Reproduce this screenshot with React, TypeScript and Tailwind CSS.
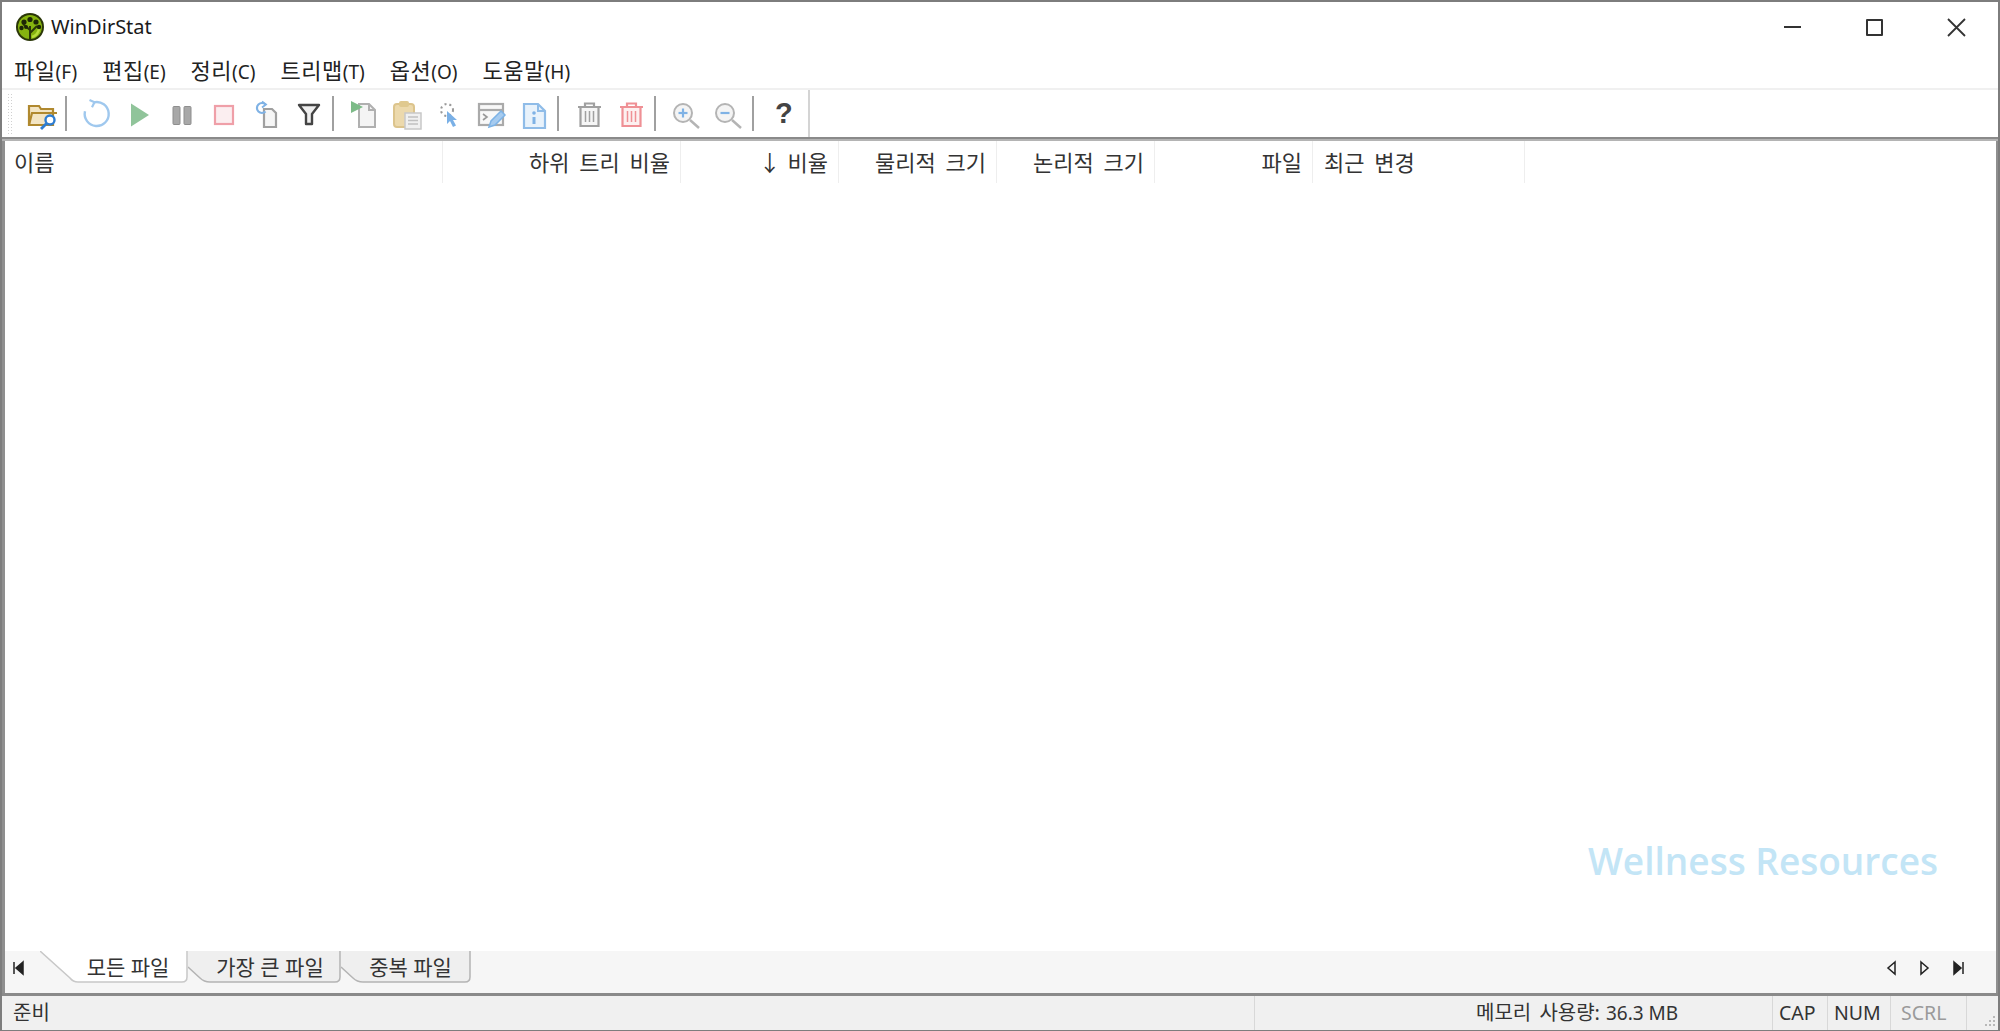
const KR = { fontFamily: '"Noto Sans", "Noto Sans CJK KR", sans-serif' };

const menus = [
  ['파일', '(F)'],
  ['편집', '(E)'],
  ['정리', '(C)'],
  ['트리맵', '(T)'],
  ['옵션', '(O)'],
  ['도움말', '(H)'],
];

const columns = [
  { label: '이름', w: 'w-[438px]', cls: 'pl-[9px] pr-[10px]' },
  { label: '하위 트리 비율', w: 'w-[238px]', cls: 'pl-[11px] pr-[10px] justify-end [word-spacing:4px]' },
  { label: '↓ 비율', w: 'w-[158px]', cls: 'pl-[11px] pr-[10px] justify-end [word-spacing:1px]' },
  { label: '물리적 크기', w: 'w-[158px]', cls: 'pl-[11px] pr-[10px] justify-end [word-spacing:4px]' },
  { label: '논리적 크기', w: 'w-[158px]', cls: 'pl-[11px] pr-[10px] justify-end [word-spacing:4px]' },
  { label: '파일', w: 'w-[158px]', cls: 'pl-[11px] pr-[10px] justify-end' },
  { label: '최근 변경', w: 'w-[212px]', cls: 'pl-[11px] pr-[10px] [word-spacing:4px]' },
];

function Icon({ children }: { children: React.ReactNode }) {
  return (
    <div className="w-[42.4px] h-full flex items-center justify-center shrink-0">
      <svg width="32" height="32" viewBox="0 0 32 32" fill="none">{children}</svg>
    </div>
  );
}

function Sep() {
  return (
    <div className="w-[12.6px] h-full shrink-0 flex items-center pl-[2px]">
      <div className="w-[2px] h-[35px] bg-[#a0a0a0]" />
    </div>
  );
}

function Trash({ c, fill }: { c: string; fill: string }) {
  return (
    <>
      <path d="M5 9h23M12 9V5.5h9V9" stroke={c} strokeWidth="2.2" />
      <path d="M7.500 9v19h18V9z" fill={fill} stroke={c} strokeWidth="2.2" />
      <path d="M12.500 13v11M16.500 13v11M20.500 13v11" stroke={c} strokeWidth="1.5" />
    </>
  );
}

function Lens({ minus }: { minus?: boolean }) {
  return (
    <>
      <circle cx="13" cy="15" r="9" fill="#f4f4f4" stroke="#b4b4b4" strokeWidth="2" />
      <path d="M20 22l9 8" stroke="#b4b4b4" strokeWidth="2.500" />
      <path d="M8.500 15h9" stroke="#7fb2e5" strokeWidth="2.200" />
      {!minus && <path d="M13 10.500v9" stroke="#7fb2e5" strokeWidth="2.200" />}
    </>
  );
}

function Toolbar() {
  return (
    <div className="h-[47px] flex items-center bg-white shrink-0">
      <div className="w-[808px] h-full flex items-center border-r-2 border-[#d4d4d4]">
        <div className="ml-[5px] mr-[8px] w-[6px] h-[42px] shrink-0 bg-[radial-gradient(#d0d0d0_1px,transparent_1px)] bg-[length:3px_3px]" />
        <Icon>
          <path d="M3 27V8h10l2 3h12v16z" fill="#f3e5c4" stroke="#b0892f" strokeWidth="2.200" />
          <path d="M3 27l3-12h25" stroke="#b0892f" strokeWidth="2.200" />
          <circle cx="24" cy="22" r="4.500" fill="#fff" stroke="#2d7dd2" strokeWidth="2.400" />
          <path d="M20.500 25.500L15 31" stroke="#2d7dd2" strokeWidth="2.800" />
        </Icon>
        <Sep />
        <Icon>
          <path d="M13 4.300a12 12 0 1 1-9 9" stroke="#9fc8ee" strokeWidth="2.400" />
          <path d="M8.500 2l5 2.300-2.500 5" stroke="#9fc8ee" strokeWidth="2.200" />
        </Icon>
        <Icon><path d="M7 5.500l18 11.500-18 11.500z" fill="#90c49a" /></Icon>
        <Icon>
          <rect x="7" y="8.500" width="7" height="18" rx="1" fill="#a8a8a8" stroke="#8e8e8e" />
          <rect x="18" y="8.500" width="7" height="18" rx="1" fill="#a8a8a8" stroke="#8e8e8e" />
        </Icon>
        <Icon><rect x="7" y="8" width="18" height="18" fill="#fbeef0" stroke="#ef9fa8" strokeWidth="2.200" /></Icon>
        <Icon>
          <path d="M13 11h8l4 4v14H13z" fill="#f6f6f6" stroke="#a0a0a0" strokeWidth="2.200" />
          <path d="M14.500 13.500a5 5 0 1 1 0-7" stroke="#7fb2e5" strokeWidth="2.200" />
          <path d="M11 3.500l4 3-4 3" stroke="#7fb2e5" strokeWidth="1.800" />
        </Icon>
        <Icon>
          <path d="M6 7h20l-7 9v10h-6V16z" fill="#efefef" stroke="#444" strokeWidth="2.400" strokeLinejoin="round" />
        </Icon>
        <Sep />
        <Icon>
          <path d="M11 6h10l6 6v17H11z" fill="#f4f4f4" stroke="#b0b0b0" strokeWidth="2" />
          <path d="M21 6v6h6" stroke="#b0b0b0" strokeWidth="2" />
          <path d="M3 3l12 6-12 6z" fill="#7dbb88" />
        </Icon>
        <Icon>
          <rect x="3" y="6" width="20" height="23" rx="3" fill="#ecd9ac" stroke="#dcc48c" strokeWidth="2" />
          <rect x="8" y="3" width="10" height="6" rx="2" fill="#e0c98f" />
          <rect x="14" y="15" width="16" height="16" fill="#f0f0f0" stroke="#c8c8c8" strokeWidth="1.500" />
          <path d="M17 19h10M17 22.500h10M17 26h10" stroke="#c0c0c0" strokeWidth="1.400" />
        </Icon>
        <Icon>
          <circle cx="14" cy="12" r="6" stroke="#999" strokeWidth="2" strokeDasharray="2 3" />
          <path d="M14 13v13l3-3 3 6 3-1.500-3-5.500h4z" fill="#7ab0e6" />
        </Icon>
        <Icon>
          <rect x="4" y="6" width="24" height="21" fill="#f8f8f8" stroke="#aaa" strokeWidth="2.200" />
          <path d="M4 12h24" stroke="#aaa" strokeWidth="2.200" />
          <path d="M8 16l4 3-4 3" stroke="#999" strokeWidth="1.600" />
          <path d="M14 29l2-6 10-10 4 4-10 10z" fill="#a6cbef" stroke="#7db3e6" strokeWidth="1.500" />
        </Icon>
        <Icon>
          <path d="M6 6h14l7 7v17H6z" fill="#e8f2fb" stroke="#8fbce8" strokeWidth="2.200" />
          <path d="M20 6v7h7" stroke="#8fbce8" strokeWidth="2" />
          <circle cx="16" cy="15" r="1.800" fill="#7fb2e5" />
          <path d="M16 19v7" stroke="#7fb2e5" strokeWidth="3" />
        </Icon>
        <Sep />
        <Icon><Trash c="#a0a0a0" fill="#f6f6f6" /></Icon>
        <Icon><Trash c="#ef9095" fill="#fdf0f0" /></Icon>
        <Sep />
        <Icon><Lens /></Icon>
        <Icon><Lens minus /></Icon>
        <Sep />
        <div className="w-[42.4px] pl-[1px] text-center text-[29px] font-bold text-[#444] shrink-0" style={{ fontFamily: '"Liberation Sans", sans-serif' }}>?</div>
      </div>
    </div>
  );
}

function Arrow({ d, fill }: { d: string; fill?: string }) {
  return (
    <svg width="12" height="16" viewBox="0 0 12 16" fill={fill ?? 'none'} className="shrink-0">
      <path d={d} stroke="#222" strokeWidth="1.500" />
    </svg>
  );
}

function Tab({ label, active, w, slant, pl }: { label: string; active?: boolean; w: number; slant: number; pl: string }) {
  // active tab slants from the top, the others only show a short curve at the bottom
  const edge = active
    ? `M0 0 L${slant} 27 Q${slant + 3} 31 ${slant + 8} 31`
    : `M0 16 L${slant - 4} 27 Q${slant} 31 ${slant + 6} 31`;
  const right = `H${w - 6} Q${w - 1} 31 ${w - 1} 26 V0`;
  return (
    <div className={`relative h-[33px] flex items-center justify-center shrink-0 text-[21px] text-[#333] ${pl}`} style={{ width: w }}>
      <svg width={w} height="33" className="absolute inset-0">
        <path d={`${edge} ${right} H0 Z`} fill={active ? '#ffffff' : '#efefef'} />
        <path d={`${edge} ${right}`} fill="none" stroke={active ? '#c8c8c8' : '#b4b4b4'} strokeWidth="1.500" />
      </svg>
      <span className="relative">{label}</span>
    </div>
  );
}

export default function App() {
  return (
    <div className="w-[2000px] h-[1031px] flex flex-col bg-white border-x-2 border-t-2 border-b border-[#7d7d7d] overflow-hidden text-[#222]" style={KR}>
      <div className="h-[50px] flex items-center shrink-0">
        <svg width="28" height="28" viewBox="0 0 28 28" className="ml-[14px] mr-[7px]">
          <circle cx="14" cy="14" r="14" fill="#2a3608" />
          <circle cx="14" cy="14" r="12" fill="#86b30f" />
          <path d="M14 26V13M14 20l7-7M14 17L7 11" stroke="#2a3608" strokeWidth="2" />
          <path d="M16 24q6-2 7-8" stroke="#b6dc3c" strokeWidth="2.500" fill="none" />
          <circle cx="8" cy="9" r="2.600" fill="#1d2606" />
          <circle cx="14" cy="6.500" r="2.600" fill="#1d2606" />
          <circle cx="20" cy="9" r="2.600" fill="#1d2606" />
          <circle cx="5.500" cy="15" r="2.200" fill="#1d2606" />
          <circle cx="23" cy="14" r="2.200" fill="#1d2606" />
          <circle cx="10" cy="14" r="2" fill="#1d2606" />
        </svg>
        <span className="text-[20px] text-[#1a1a1a]">WinDirStat</span>
        <div className="ml-auto flex items-center">
          <div className="w-[82px] flex justify-center">
            <div className="w-[17px] h-[2px] bg-[#333]" />
          </div>
          <div className="w-[82px] flex justify-center">
            <div className="w-[17px] h-[17px] border-2 border-[#333] rounded-[1px]" />
          </div>
          <div className="w-[82px] mr-[1px] flex justify-center">
            <svg width="19" height="19" viewBox="0 0 19 19"><path d="M1 1l17 17M18 1L1 18" stroke="#333" strokeWidth="1.800" /></svg>
          </div>
        </div>
      </div>

      <div className="h-[38px] flex items-center gap-[25px] pl-[12px] shrink-0 border-b-2 border-[#f0f0f0]">
        {menus.map(([k, m]) => (
          <div key={k} className="text-[22px] tracking-[0.5px] text-[#222] flex items-baseline">
            {k}<span className="text-[19px] tracking-normal">{m}</span>
          </div>
        ))}
      </div>

      <Toolbar />

      <div className="h-[4px] shrink-0 bg-[#8a8a8a] border-b-2 border-[#b4b4b4]" />

      <div className="flex-1 flex flex-col min-h-0 border-l-[3px] border-r-2 border-[#8f8f8f] relative">
        <div className="h-[42px] flex shrink-0">
          {columns.map((c) => (
            <div key={c.label} className={`${c.w} ${c.cls} h-full border-r border-[#eeeeee] flex items-center text-[22px] text-[#333]`}>
              {c.label}
            </div>
          ))}
        </div>
        <div className="flex-1" />
        <div className="absolute right-[58px] bottom-[105px] text-[37px] font-semibold text-[#c3e5f6]" style={{ fontFamily: '"Open Sans", sans-serif' }}>
          Wellness Resources
        </div>

        <div className="h-[33px] flex items-center bg-[#f6f6f6] shrink-0">
          <div className="w-[35px] pl-[7px]"><Arrow d="M2 2v12M11 2L4 8l7 6z" fill="#222" /></div>
          <Tab label="모든 파일" active w={148} slant={30} pl="pl-[28px]" />
          <Tab label="가장 큰 파일" w={153} slant={16} pl="pl-[11px]" />
          <Tab label="중복 파일" w={130} slant={16} pl="pl-[9px]" />
          <div className="ml-auto flex items-center gap-[22px] pr-[31px]">
            <Arrow d="M10 2L3 8l7 6z" />
            <Arrow d="M2 2l7 6-7 6z" />
            <Arrow d="M1 2l7 6-7 6zM10 2v12" fill="#222" />
          </div>
        </div>
        <div className="h-[9px] bg-[#f6f6f6] shrink-0" />
      </div>

      <div className="h-[3px] shrink-0 bg-[#8a8a8a]" />

      <div className="h-[34px] flex items-center bg-[#f0f0f0] shrink-0 text-[#333] relative">
        <div className="w-[1253px] pl-[11px] h-full flex items-center border-r border-[#d8d8d8] text-[20px]">준비</div>
        <div className="w-[518px] pl-[221px] h-full flex items-center gap-[6px] border-r border-[#d8d8d8]">
          <span className="text-[20px] [word-spacing:3px]">메모리 사용량:</span>
          <span className="text-[19px]">36.3 MB</span>
        </div>
        <div className="w-[55px] pl-[6px] h-full flex items-center border-r border-[#d8d8d8] text-[19.5px]">CAP</div>
        <div className="w-[63px] pl-[6px] h-full flex items-center border-r border-[#d8d8d8] text-[19.5px]">NUM</div>
        <div className="w-[76px] pl-[10px] h-full flex items-center border-r border-[#d8d8d8] text-[19.5px] text-[#9a9a9a]">SCRL</div>
        <svg width="14" height="14" viewBox="0 0 14 14" className="absolute right-[2px] bottom-[2px]">
          <g fill="#b8b8b8">
            <rect x="11" y="2" width="2" height="2" />
            <rect x="7" y="6" width="2" height="2" />
            <rect x="11" y="6" width="2" height="2" />
            <rect x="3" y="10" width="2" height="2" />
            <rect x="7" y="10" width="2" height="2" />
            <rect x="11" y="10" width="2" height="2" />
          </g>
        </svg>
      </div>
    </div>
  );
}
